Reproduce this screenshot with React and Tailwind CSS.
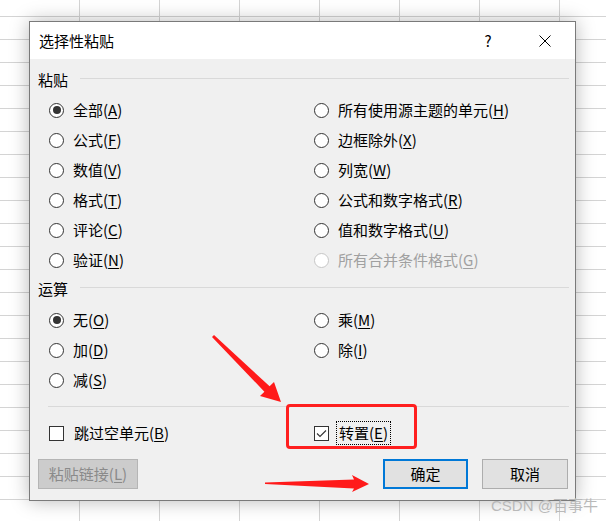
import React from 'react';

// Radio button in Windows 10 style
const Radio = ({ checked, disabled, label, hotkey }) => (
  <div className="flex items-center h-[30px]">
    <span
      className={
        'w-[15px] h-[15px] rounded-full border bg-white flex items-center justify-center ' +
        (disabled ? 'border-[#c6c6c6]' : 'border-[#333333]')
      }
    >
      {checked && <span className="w-[8px] h-[8px] rounded-full bg-[#333333]" />}
    </span>
    <span className={'ml-[9px] ' + (disabled ? 'text-[#a0a0a0]' : 'text-black')}>
      {label}(<span className="underline underline-offset-2">{hotkey}</span>)
    </span>
  </div>
);

const Check = ({ checked, label, hotkey, focused }) => (
  <div className="flex items-center h-[30px]">
    <span className="w-[15px] h-[15px] border border-[#333333] bg-white flex items-center justify-center">
      {checked && (
        <svg width="11" height="9" viewBox="0 0 11 9">
          <path d="M1 4.5 L4 7.5 L10 1.5" fill="none" stroke="#333" strokeWidth="1.1" />
        </svg>
      )}
    </span>
    <span
      className={
        'ml-[7px] px-[2px] leading-[22px] ' +
        (focused ? 'border border-dotted border-black' : 'border border-transparent')
      }
    >
      {label}(<span className="underline underline-offset-2">{hotkey}</span>)
    </span>
  </div>
);

const GroupLabel = ({ text, className }) => (
  <div className={'flex items-center h-[20px] pl-[8px] pr-[6px] ' + className}>
    <span>{text}</span>
    <span className="flex-1 h-px bg-[#d9d9d9] ml-[12px] -mt-[3px]" />
  </div>
);

export default function App() {
  return (
    <div className="relative w-[606px] h-[521px] overflow-hidden bg-white bg-[linear-gradient(to_right,#d4d4d4_1px,transparent_1px),linear-gradient(to_bottom,#d4d4d4_1px,transparent_1px)] bg-[size:80px_23px] bg-[position:79px_16px] pl-[29px] pt-[21px] font-['Noto_Sans_CJK_SC','Noto_Sans',sans-serif] text-[15px] leading-[20px]">
      {/* Dialog */}
      <div className="w-[547px] h-[480px] border border-[#7a7a7a] bg-[#f0f0f0] shadow-[0_0_18px_rgba(0,0,0,0.28)] flex flex-col">
        <div className="h-[37px] bg-white flex items-center pl-[9px] shrink-0">
          <span className="flex-1">选择性粘贴</span>
          <span className="w-[20px] text-center mr-[32px]">?</span>
          <span className="w-[30px] flex justify-center mr-[15px]">
            <svg width="12" height="12" viewBox="0 0 12 12">
              <path d="M0.5 0.5 L11.5 11.5 M11.5 0.5 L0.5 11.5" stroke="#000" strokeWidth="1" />
            </svg>
          </span>
        </div>

        <GroupLabel text="粘贴" className="mt-[11px]" />
        <div className="grid grid-cols-[265px_1fr] pl-[19px] mt-[5px]">
          <Radio checked label="全部" hotkey="A" />
          <Radio label="所有使用源主题的单元" hotkey="H" />
          <Radio label="公式" hotkey="F" />
          <Radio label="边框除外" hotkey="X" />
          <Radio label="数值" hotkey="V" />
          <Radio label="列宽" hotkey="W" />
          <Radio label="格式" hotkey="T" />
          <Radio label="公式和数字格式" hotkey="R" />
          <Radio label="评论" hotkey="C" />
          <Radio label="值和数字格式" hotkey="U" />
          <Radio label="验证" hotkey="N" />
          <Radio disabled label="所有合并条件格式" hotkey="G" />
        </div>

        <GroupLabel text="运算" className="mt-[4px]" />
        <div className="grid grid-cols-[265px_1fr] pl-[19px] mt-[6px]">
          <Radio checked label="无" hotkey="O" />
          <Radio label="乘" hotkey="M" />
          <Radio label="加" hotkey="D" />
          <Radio label="除" hotkey="I" />
          <Radio label="减" hotkey="S" />
        </div>

        <div className="h-px bg-[#d9d9d9] ml-[18px] mr-[6px] mt-[11px]" />

        <div className="grid grid-cols-[265px_1fr] pl-[19px] mt-[11px]">
          <Check label="跳过空单元" hotkey="B" />
          <Check checked focused label="转置" hotkey="E" />
        </div>

        <div className="flex items-center mt-[11px] pl-[8px] pr-[7px]">
          <button className="w-[100px] h-[30px] bg-[#cccccc] border border-[#b5b5b5] text-[#8a8a8a]">
            粘贴链接(<span className="underline underline-offset-2">L</span>)
          </button>
          <div className="flex-1" />
          <button className="w-[85px] h-[30px] bg-[#e1e1e1] border-2 border-[#0078d7] text-black">
            确定
          </button>
          <button className="w-[86px] h-[30px] bg-[#e1e1e1] border border-[#adadad] text-black ml-[14px]">
            取消
          </button>
        </div>
      </div>

      {/* Annotations */}
      <div className="absolute left-[286px] top-[404px] w-[131px] h-[45px] border-[3px] border-[#ff1f1f] rounded-[4px]" />
      <svg className="absolute left-0 top-0 pointer-events-none" width="606" height="521">
        <polygon
          fill="#ff1a1a"
          points="212,337 214,335 269.6,386.3 274,382 281,402 260,396 264.4,391.7"
        />
        <polygon
          fill="#ff1a1a"
          points="265,482.5 354,479.5 352,475 369,484 352,492 354,488.5 265,484"
        />
      </svg>
      <div className="absolute left-[491px] top-[496px] text-[15px] text-[#b9b9b9] font-['Liberation_Sans','Noto_Sans_CJK_SC',sans-serif]">
        CSDN @百事牛
      </div>
    </div>
  );
}
